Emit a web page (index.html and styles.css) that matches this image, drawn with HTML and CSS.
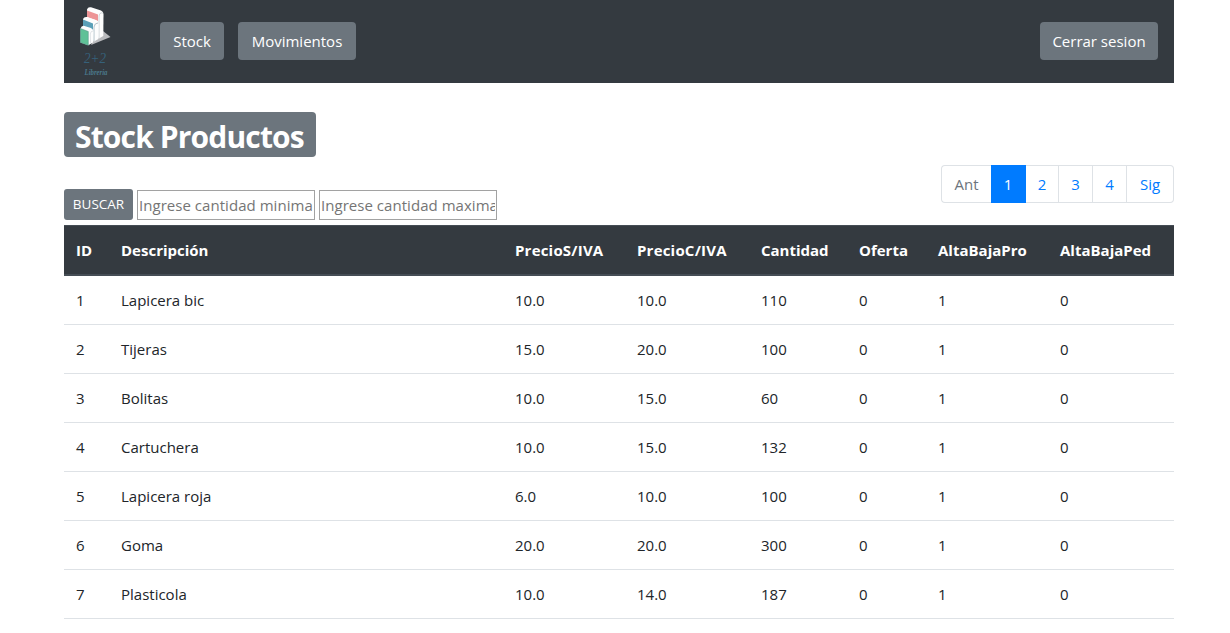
FILE: index.html
```html
<!DOCTYPE html>
<html lang="es">
<head>
<meta charset="utf-8">
<title>Stock Productos</title>
<link rel="stylesheet" href="styles.css">
</head>
<body>
<div class="container">
  <nav class="navbar">
    <a class="brand" href="#">
      <svg class="logo" width="36" height="82" viewBox="0 0 36 82" aria-label="2+2 Libreria">
        <path d="M11 45 L30.5 37 L23 31 L17 33 Z" fill="#b9babd"/>
        <path d="M7 9.5 Q8 6.5 11 7.3 L21 10.5 Q23.5 11.5 23.5 14 L23.3 36 L19 38.5 L7 30 Z" fill="#fdfdfd"/>
        <path d="M7 10.5 L18 14.5 L18 21 L7 17 Z" fill="#ed9496"/>
        <path d="M19 38 L19 17 Q19 12 23 13" fill="none" stroke="#c3cbd1" stroke-width=".8"/>
        <path d="M3 19 Q4 16.5 7 17 L16 20 Q18.5 21 18.5 24 L18.4 39 L14 41.5 L3 34 Z" fill="#fdfdfd"/>
        <path d="M3 19.5 L13 23.5 L13 30 L3 26 Z" fill="#5ba0b8"/>
        <path d="M14 41 L14 27 Q14.5 23 18 23" fill="none" stroke="#9fb3bd" stroke-width=".8"/>
        <path d="M.5 28.5 Q1.5 25.3 4.5 26 L11 28 Q13.3 29 13.3 32 L13 42.5 L8.3 45.3 L.5 42.5 Z" fill="#fdfdfd"/>
        <path d="M.5 28.5 L8.3 31.5 L8.3 45.3 L.5 42.5 Z" fill="#5fc197" stroke="#4c8d83" stroke-width=".5"/>
        <path d="M10.5 43.5 L10.3 34 Q10.5 31 13 31" fill="none" stroke="#cdd2d6" stroke-width=".6"/>
        <text class="logo-name" x="4" y="62.5" textLength="22" lengthAdjust="spacingAndGlyphs">2+2</text>
        <text class="logo-sub" x="4.5" y="74.5" textLength="23" lengthAdjust="spacingAndGlyphs">Libreria</text>
      </svg>
    </a>
    <a class="btn" href="#">Stock</a>
    <a class="btn btn-mov" href="#">Movimientos</a>
    <a class="btn btn-exit" href="#">Cerrar sesion</a>
  </nav>

  <h1 class="title">Stock Productos</h1>

  <div class="toolbar">
    <form class="search">
      <button class="btn-sm" type="button">BUSCAR</button>
      <input class="field" type="text" placeholder="Ingrese cantidad minima">
      <input class="field" type="text" placeholder="Ingrese cantidad maxima">
    </form>
    <ul class="pagination">
      <li class="page p-ant disabled">Ant</li>
      <li class="page p-1 active">1</li>
      <li class="page p-2">2</li>
      <li class="page p-3">3</li>
      <li class="page p-4">4</li>
      <li class="page p-sig">Sig</li>
    </ul>
  </div>

  <table class="table">
    <colgroup><col class="c-id"><col class="c-desc"><col class="c-ps"><col class="c-pc"><col class="c-cant"><col class="c-of"><col class="c-pro"><col class="c-ped"></colgroup>
    <thead>
      <tr><th>ID</th><th>Descripción</th><th class="wide">PrecioS/IVA</th><th class="wide">PrecioC/IVA</th><th>Cantidad</th><th>Oferta</th><th>AltaBajaPro</th><th>AltaBajaPed</th></tr>
    </thead>
    <tbody>
      <tr><td>1</td><td>Lapicera bic</td><td>10.0</td><td>10.0</td><td>110</td><td>0</td><td>1</td><td>0</td></tr>
      <tr><td>2</td><td>Tijeras</td><td>15.0</td><td>20.0</td><td>100</td><td>0</td><td>1</td><td>0</td></tr>
      <tr><td>3</td><td>Bolitas</td><td>10.0</td><td>15.0</td><td>60</td><td>0</td><td>1</td><td>0</td></tr>
      <tr><td>4</td><td>Cartuchera</td><td>10.0</td><td>15.0</td><td>132</td><td>0</td><td>1</td><td>0</td></tr>
      <tr><td>5</td><td>Lapicera roja</td><td>6.0</td><td>10.0</td><td>100</td><td>0</td><td>1</td><td>0</td></tr>
      <tr><td>6</td><td>Goma</td><td>20.0</td><td>20.0</td><td>300</td><td>0</td><td>1</td><td>0</td></tr>
      <tr><td>7</td><td>Plasticola</td><td>10.0</td><td>14.0</td><td>187</td><td>0</td><td>1</td><td>0</td></tr>
    </tbody>
  </table>
</div>
</body>
</html>
```
FILE: styles.css
```css
* { box-sizing: border-box; }
body {
  margin: 0;
  background: #fff;
  color: #212529;
  font: 15px/24px "Open Sans", "Noto Sans", sans-serif;
  overflow: hidden;
}
.container { width: 1110px; margin-left: 64px; }

.navbar {
  display: flex;
  align-items: center;
  height: 83px;
  padding: 0 16px 1px;
  background: #343a40;
}
.brand { display: flex; width: 36px; margin-right: 44px; }
.logo { display: block; }
.logo-name { font: italic 14px "Liberation Serif", serif; fill: #36617a; }
.logo-sub { font: italic bold 8px "Liberation Serif", serif; fill: #4b788b; }
.btn {
  width: 64px;
  height: 38px;
  border-radius: 4px;
  background: #6c757d;
  color: #fff;
  line-height: 38px;
  text-align: center;
  text-decoration: none;
  white-space: nowrap;
}
.btn-mov { width: 118px; margin-left: 14px; }
.btn-exit { width: 118px; margin-left: auto; }

.title {
  width: 252px;
  height: 45px;
  margin: 29px 0 0;
  padding: 0 11px;
  border-radius: 4px;
  background: #6c757d;
  color: #fff;
  font-size: 30px;
  font-weight: 700;
  letter-spacing: -0.85px;
  line-height: 49px;
  white-space: nowrap;
}

.toolbar {
  display: flex;
  justify-content: space-between;
  height: 60px;
  margin-top: 8px;
}
.search { display: flex; gap: 4px; margin: 24px 0 0; }
.btn-sm {
  width: 69px;
  height: 31px;
  padding: 0;
  border: 0;
  border-radius: 3px;
  background: #6c757d;
  color: #fff;
  font: 13.5px/21px "Open Sans", sans-serif;
}
.field {
  width: 178px;
  height: 30px;
  margin: 1px 0 0;
  padding: 1px 1px;
  border: 1px solid #a2a2a2;
  font: 15px/24px "Open Sans", sans-serif;
  letter-spacing: 0.04px;
}
.field::placeholder { color: #757575; }

.pagination { display: flex; margin: 0; padding: 0; list-style: none; }
.page {
  height: 38px;
  border: 1px solid #dee2e6;
  border-left: 0;
  color: #007bff;
  line-height: 37px;
  text-align: center;
}
.p-ant { width: 50px; border-left: 1px solid #dee2e6; border-right: 0; border-radius: 4px 0 0 4px; }
.p-1 { width: 35px; }
.p-2 { width: 33px; }
.p-3 { width: 34px; }
.p-4 { width: 34px; }
.p-sig { width: 47px; border-radius: 0 4px 4px 0; }
.disabled { color: #6c757d; }
.active { background: #007bff; border-color: #007bff; color: #fff; }

.table {
  width: 1110px;
  table-layout: fixed;
  border-collapse: separate;
  border-spacing: 0;
}
.c-id { width: 45px; }
.c-desc { width: 394px; }
.c-ps { width: 122px; }
.c-pc { width: 124px; }
.c-cant { width: 98px; }
.c-of { width: 79px; }
.c-pro { width: 122px; }
.c-ped { width: 126px; }
.table th {
  height: 51px;
  padding: 0 12px;
  border-top: 1px solid #454d55;
  border-bottom: 2px solid #454d55;
  background: #343a40;
  color: #fff;
  font-weight: 700;
  text-align: left;
}
.table th.wide { letter-spacing: 0.2px; }
.table td { height: 49px; padding: 0 12px; border-bottom: 1px solid #dee2e6; }
```
